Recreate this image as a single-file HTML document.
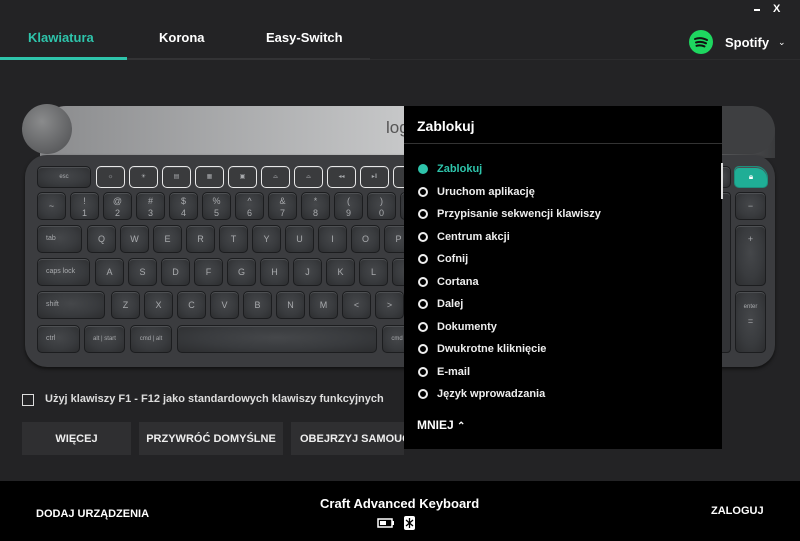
<!DOCTYPE html>
<html><head><meta charset="utf-8"><style>
*{margin:0;padding:0;box-sizing:border-box}
body{width:800px;height:541px;background:#232325;font-family:"Liberation Sans",sans-serif;color:#fff;position:relative;overflow:hidden}
.a{position:absolute}
.k{position:absolute;background:radial-gradient(ellipse at 50% 45%,#45474a 0%,#393b3e 55%,#2c2d2f 100%);border:1px solid #1c1d1f;border-radius:5px;color:#a8aaad;font-size:9px;text-align:center;box-shadow:inset 0 1px 0 #4e5053}
.f{border:1.5px solid #e8e8e8;background:#3a3b3d;border-radius:5px;font-size:6px}
.t{font-size:7px;text-align:left;padding-left:8px}
.dd div{height:22.5px;font-size:11px;display:flex;align-items:center;font-weight:bold;color:#eee}
.dd span{width:10px;height:10px;border:2px solid #eee;border-radius:50%;margin-right:9px;display:inline-block}
.btn{position:absolute;top:422px;height:33px;background:#2f2f31;font-size:11px;font-weight:bold;display:flex;align-items:center;justify-content:center;color:#eee}
</style></head><body>
<div class="a" style="left:754px;top:9px;width:6px;height:2px;background:#fff"></div>
<div class="a" style="left:773px;top:3px;font-size:11px;font-weight:bold">X</div>
<div class="a" style="left:28px;top:30px;font-size:13px;font-weight:bold;color:#2ec4ab">Klawiatura</div>
<div class="a" style="left:159px;top:30px;font-size:13px;font-weight:bold">Korona</div>
<div class="a" style="left:266px;top:30px;font-size:13px;font-weight:bold">Easy-Switch</div>
<div class="a" style="left:0;top:58px;width:370px;height:2px;background:#333335"></div>
<div class="a" style="left:0;top:57px;width:127px;height:3px;background:#2ec4ab"></div>
<div class="a" style="left:370px;top:59px;width:430px;height:1px;background:#2c2c2e"></div>
<svg class="a" style="left:689px;top:30px" width="24" height="24"><circle cx="12" cy="12" r="12" fill="#1ed760"/><path d="M6 9c4-1.5 8-1 12 1M7 12.5c3.5-1 7-.7 10 .8M7.5 15.8c3-.8 5.5-.5 8 .6" stroke="#111" stroke-width="2" fill="none" stroke-linecap="round"/></svg>
<div class="a" style="left:725px;top:35px;font-size:13px;font-weight:bold">Spotify</div>
<div class="a" style="left:778px;top:37px;font-size:9px">⌄</div>

<div class="a" style="left:40px;top:106px;width:735px;height:52px;border-radius:26px 26px 0 0;background:linear-gradient(90deg,#8a8b8d,#c7c8c9 50%,#bfc0c1 80%,#5c5d5f 92%,#3a3b3d)"></div>
<div class="a" style="left:386px;top:118px;font-size:17px;color:#555">log</div>
<div class="a" style="left:22px;top:104px;width:50px;height:50px;border-radius:50%;background:radial-gradient(circle at 40% 35%,#8a8b8c,#5e5f61 70%,#4a4b4d)"></div>
<div class="a" style="left:722px;top:106px;width:53px;height:48px;border-radius:0 26px 26px 0;background:#3e3f41"></div>
<div class="a" style="left:25px;top:155px;width:750px;height:212px;border-radius:22px;background:#3b3c3f;box-shadow:0 2px 3px #111"></div>

<div class="k" style="left:37px;top:166px;width:54px;height:22px;font-size:6px;line-height:20px">esc</div>
<div class="k f" style="left:96px;top:166px;width:29px;height:22px;line-height:20px">☼</div>
<div class="k f" style="left:129px;top:166px;width:29px;height:22px;line-height:20px">☀</div>
<div class="k f" style="left:162px;top:166px;width:29px;height:22px;line-height:20px">▤</div>
<div class="k f" style="left:195px;top:166px;width:29px;height:22px;line-height:20px">▦</div>
<div class="k f" style="left:228px;top:166px;width:29px;height:22px;line-height:20px">▣</div>
<div class="k f" style="left:261px;top:166px;width:29px;height:22px;line-height:20px">⌓</div>
<div class="k f" style="left:294px;top:166px;width:29px;height:22px;line-height:20px">⌓</div>
<div class="k f" style="left:327px;top:166px;width:29px;height:22px;line-height:20px">◂◂</div>
<div class="k f" style="left:360px;top:166px;width:29px;height:22px;line-height:20px">▸‖</div>
<div class="k f" style="left:393px;top:166px;width:29px;height:22px"></div>

<div class="k" style="left:37px;top:192px;width:29px;height:28px;line-height:26px">~</div>
<div class="k" style="left:70px;top:192px;width:29px;height:28px;line-height:12px;padding-top:2px">!<br>1</div>
<div class="k" style="left:103px;top:192px;width:29px;height:28px;line-height:12px;padding-top:2px">@<br>2</div>
<div class="k" style="left:136px;top:192px;width:29px;height:28px;line-height:12px;padding-top:2px">#<br>3</div>
<div class="k" style="left:169px;top:192px;width:29px;height:28px;line-height:12px;padding-top:2px">$<br>4</div>
<div class="k" style="left:202px;top:192px;width:29px;height:28px;line-height:12px;padding-top:2px">%<br>5</div>
<div class="k" style="left:235px;top:192px;width:29px;height:28px;line-height:12px;padding-top:2px">^<br>6</div>
<div class="k" style="left:268px;top:192px;width:29px;height:28px;line-height:12px;padding-top:2px">&amp;<br>7</div>
<div class="k" style="left:301px;top:192px;width:29px;height:28px;line-height:12px;padding-top:2px">*<br>8</div>
<div class="k" style="left:334px;top:192px;width:29px;height:28px;line-height:12px;padding-top:2px">(<br>9</div>
<div class="k" style="left:367px;top:192px;width:29px;height:28px;line-height:12px;padding-top:2px">)<br>0</div>
<div class="k" style="left:400px;top:192px;width:29px;height:28px"></div>

<div class="k t" style="left:37px;top:225px;width:45px;height:28px;line-height:26px">tab</div>
<div class="k" style="left:87px;top:225px;width:29px;height:28px;line-height:26px">Q</div>
<div class="k" style="left:120px;top:225px;width:29px;height:28px;line-height:26px">W</div>
<div class="k" style="left:153px;top:225px;width:29px;height:28px;line-height:26px">E</div>
<div class="k" style="left:186px;top:225px;width:29px;height:28px;line-height:26px">R</div>
<div class="k" style="left:219px;top:225px;width:29px;height:28px;line-height:26px">T</div>
<div class="k" style="left:252px;top:225px;width:29px;height:28px;line-height:26px">Y</div>
<div class="k" style="left:285px;top:225px;width:29px;height:28px;line-height:26px">U</div>
<div class="k" style="left:318px;top:225px;width:29px;height:28px;line-height:26px">I</div>
<div class="k" style="left:351px;top:225px;width:29px;height:28px;line-height:26px">O</div>
<div class="k" style="left:384px;top:225px;width:29px;height:28px;line-height:26px">P</div>

<div class="k t" style="left:37px;top:258px;width:53px;height:28px;line-height:26px">caps lock</div>
<div class="k" style="left:95px;top:258px;width:29px;height:28px;line-height:26px">A</div>
<div class="k" style="left:128px;top:258px;width:29px;height:28px;line-height:26px">S</div>
<div class="k" style="left:161px;top:258px;width:29px;height:28px;line-height:26px">D</div>
<div class="k" style="left:194px;top:258px;width:29px;height:28px;line-height:26px">F</div>
<div class="k" style="left:227px;top:258px;width:29px;height:28px;line-height:26px">G</div>
<div class="k" style="left:260px;top:258px;width:29px;height:28px;line-height:26px">H</div>
<div class="k" style="left:293px;top:258px;width:29px;height:28px;line-height:26px">J</div>
<div class="k" style="left:326px;top:258px;width:29px;height:28px;line-height:26px">K</div>
<div class="k" style="left:359px;top:258px;width:29px;height:28px;line-height:26px">L</div>
<div class="k" style="left:392px;top:258px;width:29px;height:28px"></div>

<div class="k t" style="left:37px;top:291px;width:68px;height:28px;line-height:26px">shift</div>
<div class="k" style="left:111px;top:291px;width:29px;height:28px;line-height:26px">Z</div>
<div class="k" style="left:144px;top:291px;width:29px;height:28px;line-height:26px">X</div>
<div class="k" style="left:177px;top:291px;width:29px;height:28px;line-height:26px">C</div>
<div class="k" style="left:210px;top:291px;width:29px;height:28px;line-height:26px">V</div>
<div class="k" style="left:243px;top:291px;width:29px;height:28px;line-height:26px">B</div>
<div class="k" style="left:276px;top:291px;width:29px;height:28px;line-height:26px">N</div>
<div class="k" style="left:309px;top:291px;width:29px;height:28px;line-height:26px">M</div>
<div class="k" style="left:342px;top:291px;width:29px;height:28px;line-height:26px">&lt;</div>
<div class="k" style="left:375px;top:291px;width:29px;height:28px;line-height:26px">&gt;</div>

<div class="k t" style="left:37px;top:325px;width:43px;height:28px;line-height:26px">ctrl</div>
<div class="k" style="left:84px;top:325px;width:41px;height:28px;font-size:6px;line-height:26px">alt&nbsp;|&nbsp;start</div>
<div class="k" style="left:130px;top:325px;width:42px;height:28px;font-size:6px;line-height:26px">cmd&nbsp;|&nbsp;alt</div>
<div class="k" style="left:177px;top:325px;width:200px;height:28px"></div>
<div class="k" style="left:382px;top:325px;width:30px;height:28px;font-size:6px;line-height:26px">cmd</div>

<div class="k" style="left:734px;top:166px;width:34px;height:22px;background:#1fae96;border-color:#1d8f7d;border-radius:5px 12px 5px 5px;color:#fff;line-height:20px;font-size:8px">🔒︎</div>
<div class="k" style="left:735px;top:192px;width:31px;height:28px;line-height:26px">−</div>
<div class="k" style="left:735px;top:225px;width:31px;height:61px;padding-top:8px">+</div>
<div class="k" style="left:735px;top:291px;width:31px;height:62px;font-size:6px;padding-top:12px">enter<br><br><span style="font-size:9px">=</span></div>
<div class="k" style="left:716px;top:166px;width:15px;height:22px"></div>
<div class="k" style="left:718px;top:192px;width:13px;height:161px;border-radius:4px;background:#323336"></div>

<div class="a" style="left:404px;top:106px;width:318px;height:343px;background:#000">
  <div class="a" style="left:13px;top:12px;font-size:14px;font-weight:bold">Zablokuj</div>
  <div class="a" style="left:0;top:37px;width:318px;height:1px;background:#333"></div>
  <div class="a" style="left:317px;top:57px;width:2px;height:36px;background:#ddd"></div>
  <div class="dd a" style="left:14px;top:52px">
    <div style="color:#2ec4ab"><span style="background:#2ec4ab;border-color:#2ec4ab"></span>Zablokuj</div>
    <div><span></span>Uruchom aplikację</div>
    <div><span></span>Przypisanie sekwencji klawiszy</div>
    <div><span></span>Centrum akcji</div>
    <div><span></span>Cofnij</div>
    <div><span></span>Cortana</div>
    <div><span></span>Dalej</div>
    <div><span></span>Dokumenty</div>
    <div><span></span>Dwukrotne kliknięcie</div>
    <div><span></span>E-mail</div>
    <div><span></span>Język wprowadzania</div>
  </div>
  <div class="a" style="left:13px;top:312px;font-size:12px;font-weight:bold">MNIEJ <span style="font-size:10px">⌃</span></div>
</div>

<div class="a" style="left:22px;top:394px;width:12px;height:12px;border:1.5px solid #ddd"></div>
<div class="a" style="left:45px;top:393px;font-size:11px;font-weight:bold;color:#ddd">Użyj klawiszy F1 - F12 jako standardowych klawiszy funkcyjnych</div>
<div class="btn" style="left:22px;width:109px">WIĘCEJ</div>
<div class="btn" style="left:139px;width:144px">PRZYWRÓĆ DOMYŚLNE</div>
<div class="btn" style="left:291px;width:113px;justify-content:flex-start;padding-left:9px;overflow:hidden;white-space:nowrap">OBEJRZYJ SAMOUCZEK</div>

<div class="a" style="left:0;top:481px;width:800px;height:60px;background:#000"></div>
<div class="a" style="left:36px;top:508px;font-size:11px;font-weight:bold">DODAJ URZĄDZENIA</div>
<div class="a" style="left:320px;top:496px;font-size:13px;font-weight:bold">Craft Advanced Keyboard</div>
<svg class="a" style="left:377px;top:516px" width="40" height="14"><rect x="1" y="3" width="14" height="8" fill="none" stroke="#fff" stroke-width="1.5"/><rect x="3" y="5" width="6" height="4" fill="#fff"/><rect x="15" y="5" width="2" height="4" fill="#fff"/><rect x="27" y="0" width="11" height="14" rx="2" fill="#fff"/><path d="M32.5 2v10M29 4l7 6M36 4l-7 6" stroke="#000" stroke-width="1.3"/></svg>
<div class="a" style="left:711px;top:505px;font-size:11px;font-weight:bold">ZALOGUJ</div>
</body></html>
